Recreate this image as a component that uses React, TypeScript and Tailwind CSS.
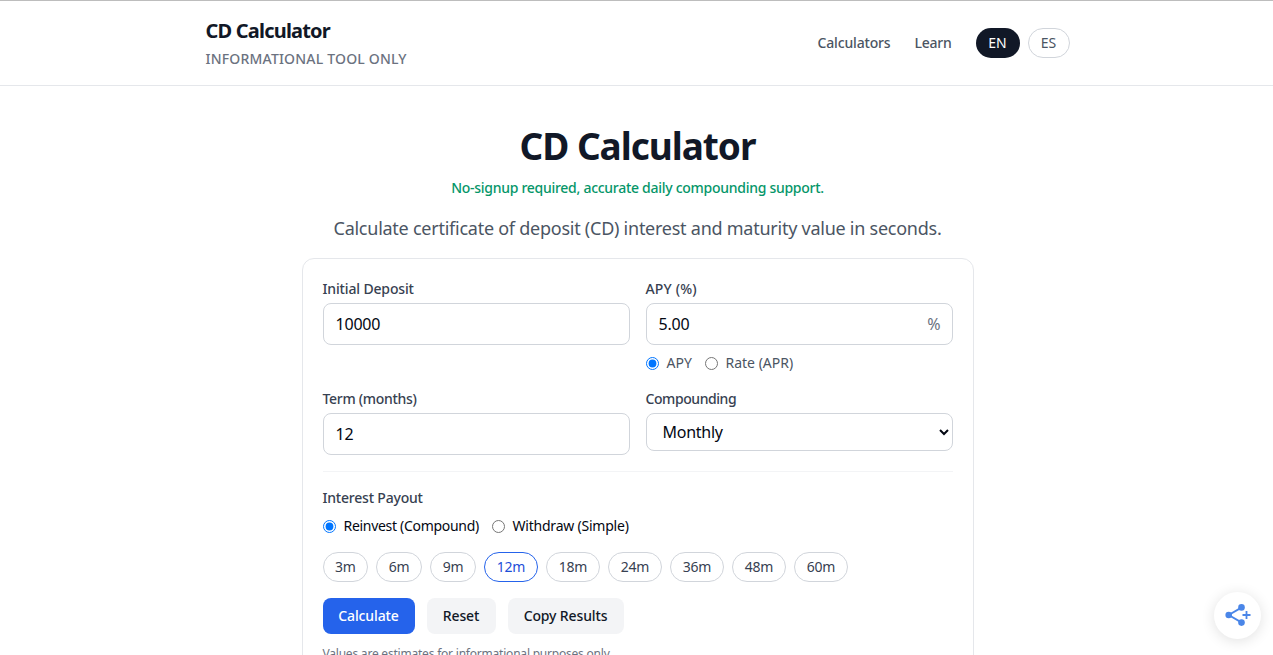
const TERMS = [
  { months: 3, width: "w-[45.5px]" },
  { months: 6, width: "w-[46px]" },
  { months: 9, width: "w-[46px]" },
  { months: 12, width: "w-[54px]" },
  { months: 18, width: "w-[54px]" },
  { months: 24, width: "w-[54px]" },
  { months: 36, width: "w-[54px]" },
  { months: 48, width: "w-[54px]" },
  { months: 60, width: "w-[54px]" },
];

const fieldLabel = "mb-1 block text-sm font-medium text-[#374151]";
const fieldInput =
  "block h-[42px] w-full rounded-lg border border-[#d1d5db] bg-white px-3 text-base tracking-[-0.2px] text-gray-950";

function Header() {
  return (
    <header className="border-t border-b border-t-[#bdbdbd] border-b-[#e5e7eb] bg-white pl-0.5">
      <div className="mx-auto flex max-w-4xl items-center justify-between px-4 py-4">
        <div className="whitespace-nowrap">
          <a href="#" className="block text-xl leading-7 font-bold tracking-[-0.8px] text-[#111827]">
            CD Calculator
          </a>
          <p className="mt-1 text-sm font-medium tracking-[0.19px] text-[#6b7280] uppercase">
            Informational tool only
          </p>
        </div>
        <nav className="flex items-center text-sm text-[#4b5563]">
          <a href="#" className="w-[73px] font-medium tracking-[-0.16px] whitespace-nowrap">
            Calculators
          </a>
          <a href="#" className="ml-6 w-[37px] font-medium tracking-[-0.25px]">
            Learn
          </a>
          <div className="ml-6 flex gap-2">
            <button className="h-[30px] w-11 rounded-full bg-[#111827] text-white">EN</button>
            <button className="h-[30px] w-[42px] rounded-full border border-[#d1d5db]">ES</button>
          </div>
        </nav>
      </div>
    </header>
  );
}

function Calculator() {
  return (
    <section className="mx-auto mt-4 max-w-2xl rounded-xl border border-[#e5e7eb] bg-white p-5 whitespace-nowrap">
      <div className="grid grid-cols-2 gap-4">
        <div>
          <label className={`${fieldLabel} tracking-[-0.15px]`}>Initial Deposit</label>
          <input className={fieldInput} defaultValue="10000" />
        </div>
        <div>
          <label className={`${fieldLabel} tracking-[0.15px]`}>APY (%)</label>
          <div className="relative">
            <input className={fieldInput} defaultValue="5.00" />
            <span className="absolute top-[9px] right-3 text-base text-[#6b7280]">%</span>
          </div>
          <div className="mt-2 flex text-sm text-[#4b5563]">
            <label className="flex w-[59px] items-center gap-2">
              <input type="radio" name="rate" defaultChecked />
              APY
            </label>
            <label className="flex items-center gap-2">
              <input type="radio" name="rate" />
              Rate (APR)
            </label>
          </div>
        </div>
        <div>
          <label className={`${fieldLabel} tracking-[-0.3px]`}>Term (months)</label>
          <input className={fieldInput} defaultValue="12" />
        </div>
        <div>
          <label className={`${fieldLabel} tracking-[-0.43px]`}>Compounding</label>
          <select className="block h-[38px] w-full rounded-lg border border-[#d1d5db] bg-white px-3 text-base tracking-[-0.25px] text-gray-950">
            <option>Monthly</option>
          </select>
        </div>
      </div>

      <div className="mt-4 border-t border-gray-100 pt-4">
        <p className="text-sm font-medium tracking-[-0.2px] text-[#374151]">Interest Payout</p>
        <div className="mt-2 flex text-sm text-gray-950">
          <label className="flex w-[169px] items-center gap-2 tracking-[-0.3px]">
            <input type="radio" name="payout" defaultChecked />
            Reinvest (Compound)
          </label>
          <label className="flex items-center gap-2 tracking-[-0.22px]">
            <input type="radio" name="payout" />
            Withdraw (Simple)
          </label>
        </div>
      </div>

      <div className="mt-4 flex gap-2 text-sm tracking-[-0.2px]">
        {TERMS.map((t) => (
          <button
            key={t.months}
            className={`h-[30px] rounded-full border ${t.width} ${
              t.months === 12 ? "border-[#2563eb] text-[#1d4ed8]" : "border-[#d1d5db] text-[#374151]"
            }`}
          >
            {t.months}m
          </button>
        ))}
      </div>

      <div className="mt-4 flex gap-3 text-sm font-medium tracking-[-0.13px] text-[#111827]">
        <button className="h-9 w-[92px] rounded-lg bg-[#2563eb] text-white">Calculate</button>
        <button className="h-9 w-[69px] rounded-lg bg-[#f3f4f6]">Reset</button>
        <button className="h-9 w-[116px] rounded-lg bg-[#f3f4f6]">Copy Results</button>
      </div>

      <p className="mt-3 text-xs tracking-[-0.21px] text-[#6b7280]">
        Values are estimates for informational purposes only.
      </p>
    </section>
  );
}

function ShareButton() {
  return (
    <button
      aria-label="Share"
      className="fixed right-3 bottom-4 flex size-[47px] items-center justify-center rounded-full bg-white shadow-[0_2px_14px_rgba(0,0,0,0.12)]"
    >
      <svg viewBox="0 0 28 24" className="mb-0.5 h-6 w-7" fill="none" stroke="#4a86e8" strokeWidth="1.8">
        <path d="M17.8 4.4 4.7 12l13.1 7.6M18.5 12h8M22.5 8v8" />
        <g fill="#4a86e8" stroke="none">
          <circle cx="4.7" cy="12" r="3.3" />
          <circle cx="17.5" cy="4.4" r="3.3" />
          <circle cx="17.5" cy="19.6" r="3.3" />
        </g>
      </svg>
    </button>
  );
}

export default function App() {
  return (
    <div className="h-screen overflow-hidden bg-white font-['Noto_Sans',sans-serif]">
      <Header />
      <main className="pl-0.5 text-center">
        <h1 className="mt-10 text-[37px] leading-10 font-bold tracking-[-1.05px] whitespace-nowrap text-[#111827]">
          CD Calculator
        </h1>
        <p className="mt-3 text-sm font-medium tracking-[-0.28px] whitespace-nowrap text-[#059669]">
          No-signup required, accurate daily compounding support.
        </p>
        <p className="mt-4 text-lg leading-7 tracking-[-0.25px] whitespace-nowrap text-[#4b5563]">
          Calculate certificate of deposit (CD) interest and maturity value in seconds.
        </p>
        <div className="text-left">
          <Calculator />
        </div>
      </main>
      <ShareButton />
    </div>
  );
}
